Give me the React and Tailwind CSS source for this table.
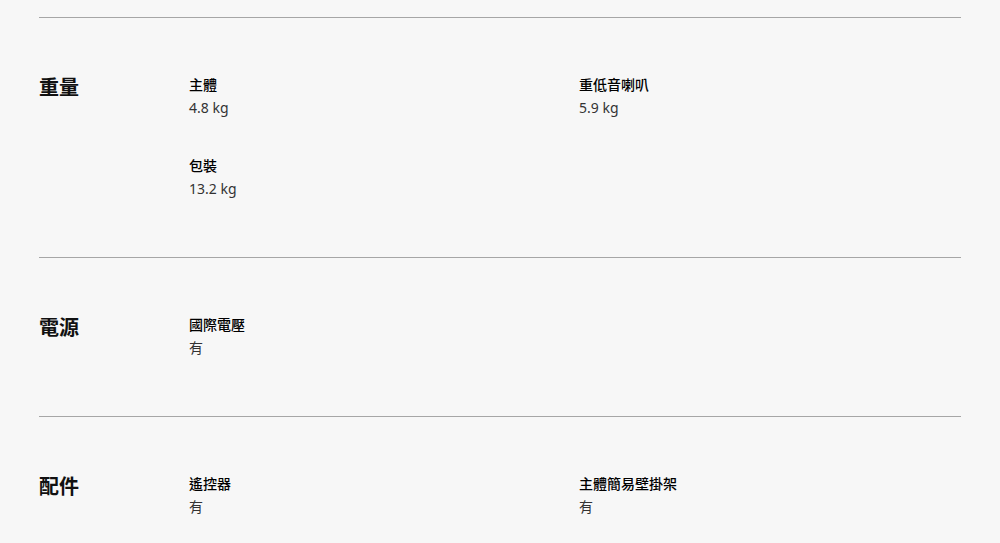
const specs = [
  {
    title: "重量",
    items: [
      { label: "主體", value: "4.8 kg" },
      { label: "重低音喇叭", value: "5.9 kg" },
      { label: "包裝", value: "13.2 kg" },
    ],
  },
  {
    title: "電源",
    items: [{ label: "國際電壓", value: "有" }],
  },
  {
    title: "配件",
    items: [
      { label: "遙控器", value: "有" },
      { label: "主體簡易壁掛架", value: "有" },
    ],
  },
];

const SpecRow = ({ title, items }) => (
  <div className="flex border-t border-[#a6a6a6] pt-[57px] pb-[55px]">
    <h3 className="w-[150px] shrink-0 text-[20px] font-bold leading-[26px] text-[#111]">{title}</h3>
    <ul className="grid flex-1 grid-cols-[390px_1fr] gap-y-[35px]">
      {items.map((item) => (
        <li key={item.label}>
          <p className="text-[14px] font-medium leading-[20px] text-black">{item.label}</p>
          <p className="text-[14px] leading-[26px] text-[#333]">{item.value}</p>
        </li>
      ))}
    </ul>
  </div>
);

export default function App() {
  return (
    <div
      className="min-h-[543px] bg-[#f7f7f7] px-[39px] pt-[17px]"
      style={{ fontFamily: '"Noto Sans", "Noto Sans CJK TC", sans-serif' }}
    >
      {specs.map((s) => (
        <SpecRow key={s.title} {...s} />
      ))}
    </div>
  );
}
